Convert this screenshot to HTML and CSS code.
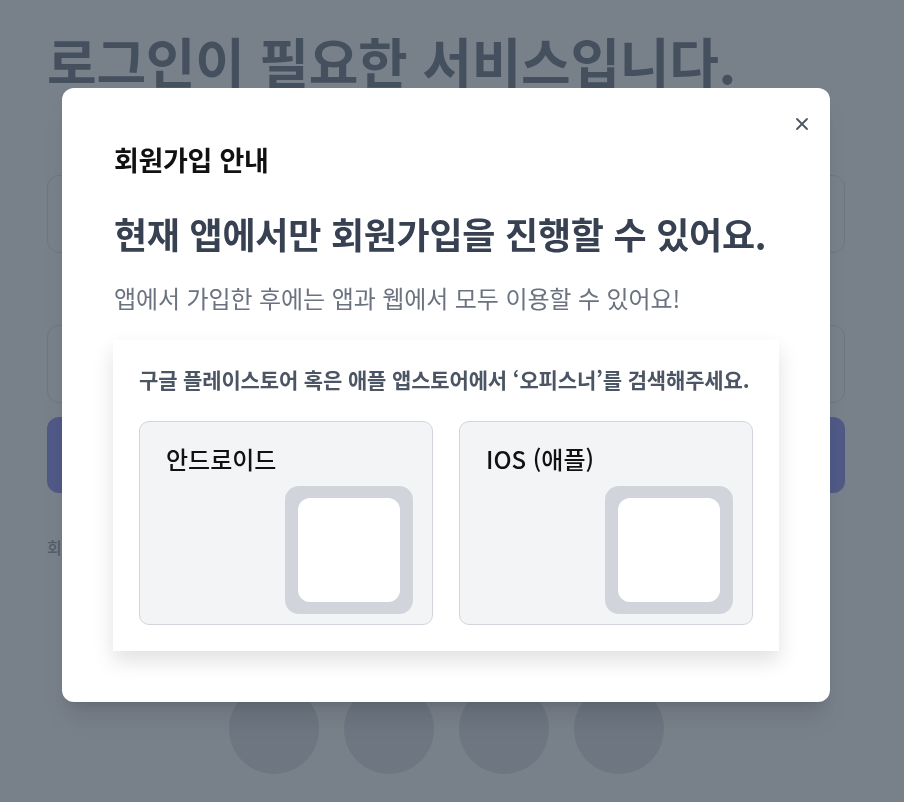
FILE: index.html
```html
<!DOCTYPE html>
<html lang="ko">

<head>
    <meta charset="UTF-8">
    <meta name="viewport" content="width=device-width, initial-scale=1.0">
    <title>로그인</title>
    <link rel="stylesheet" href="styles.css">
</head>

<body>

    <main class="page">
        <h1 class="page-title">로그인이 필요한 서비스입니다.</h1>

        <div class="field"></div>
        <div class="field field-second"></div>
        <div class="login-btn"></div>

        <p class="join-text">회원이 아니신가요?</p>

        <div class="social">
            <span class="social-item"></span>
            <span class="social-item"></span>
            <span class="social-item"></span>
            <span class="social-item"></span>
        </div>
    </main>

    <div class="overlay">
        <div class="modal">
            <button class="close-btn" type="button" aria-label="닫기">
                <svg width="14" height="14" viewBox="0 0 14 14">
                    <path d="M2 2 L12 12 M12 2 L2 12" stroke="#4b5563" stroke-width="1.8" stroke-linecap="round" />
                </svg>
            </button>

            <h2 class="modal-label">회원가입 안내</h2>
            <h3 class="modal-title">현재 앱에서만 회원가입을 진행할 수 있어요.</h3>
            <p class="modal-desc">앱에서 가입한 후에는 앱과 웹에서 모두 이용할 수 있어요!</p>

            <div class="store-box">
                <p class="store-guide">구글 플레이스토어 혹은 애플 앱스토어에서 ‘오피스너’를 검색해주세요.</p>

                <div class="store-list">
                    <div class="store-card">
                        <span class="store-name">안드로이드</span>
                        <div class="qr-frame"><div class="qr-inner"></div></div>
                    </div>
                    <div class="store-card">
                        <span class="store-name">IOS (애플)</span>
                        <div class="qr-frame"><div class="qr-inner"></div></div>
                    </div>
                </div>
            </div>
        </div>
    </div>

</body>

</html>
```

FILE: styles.css
```css
* {
    margin: 0;
    padding: 0;
    box-sizing: border-box;
}

body {
    font-family: "Noto Sans CJK KR", "Noto Sans", sans-serif;
    background-color: #fff;
    width: 904px;
    height: 802px;
    overflow: hidden;
}

/* page behind the modal */
.page {
    padding: 26px 59px 0 47px;
}

.page-title {
    font-size: 54px;
    font-weight: 700;
    color: #374151;
    line-height: 70px;
    letter-spacing: -0.3px;
}

.field {
    height: 78px;
    margin-top: 79px;
    border: 1px solid #d1d5db;
    border-radius: 12px;
}

.field-second {
    margin-top: 72px;
}

.login-btn {
    height: 76px;
    margin-top: 14px;
    background-color: #6366f1;
    border-radius: 12px;
}

.join-text {
    margin-top: 42px;
    font-size: 16px;
    color: #6b7280;
    font-weight: 500;
}

.social {
    display: flex;
    justify-content: center;
    gap: 25px;
    margin-top: 125px;
}

.social-item {
    width: 90px;
    height: 90px;
    border-radius: 50%;
    background-color: #d1d5db;
}

/* modal */
.overlay {
    position: fixed;
    inset: 0;
    background-color: rgba(75, 85, 99, 0.75);
    display: flex;
    justify-content: center;
    align-items: center;
    padding: 0 12px 12px 0;
}

.modal {
    position: relative;
    width: 768px;
    background-color: #fff;
    border-radius: 12px;
    padding: 56px 51px 51px 51px;
    box-shadow: 0 20px 25px -5px rgba(0, 0, 0, 0.1), 0 8px 10px -6px rgba(0, 0, 0, 0.1);
}

.close-btn {
    position: absolute;
    top: 29px;
    right: 21px;
    width: 14px;
    height: 14px;
    border: none;
    background: none;
    cursor: pointer;
    display: flex;
}

.modal-label {
    font-size: 27px;
    font-weight: 700;
    color: #111;
    line-height: 32px;
    letter-spacing: -0.3px;
    padding-left: 1px;
}

.modal-title {
    margin-top: 35px;
    font-size: 36px;
    font-weight: 700;
    color: #374151;
    line-height: 44px;
    letter-spacing: -0.25px;
    padding-left: 1px;
}

.modal-desc {
    margin-top: 27px;
    font-size: 24px;
    color: #6b7280;
    line-height: 32px;
    letter-spacing: -0.1px;
    padding-left: 1px;
}

.store-box {
    margin-top: 26px;
    padding: 25px 26px 26px;
    background-color: #fff;
    box-shadow: 0 10px 20px rgba(0, 0, 0, 0.12);
}

.store-guide {
    font-size: 21px;
    font-weight: 600;
    color: #4b5563;
    line-height: 28px;
    letter-spacing: -0.15px;
}

.store-list {
    display: flex;
    gap: 26px;
    margin-top: 28px;
}

.store-card {
    flex: 1;
    display: flex;
    flex-direction: column;
    padding: 22px 19px 10px 26px;
    background-color: #f3f4f6;
    border: 1px solid #d1d5db;
    border-radius: 10px;
}

.store-name {
    font-size: 24px;
    font-weight: 500;
    color: #111;
    line-height: 30px;
}

.qr-frame {
    align-self: flex-end;
    margin-top: 12px;
    width: 128px;
    height: 128px;
    padding: 12px 13px;
    background-color: #d1d5db;
    border-radius: 14px;
}

.qr-inner {
    width: 100%;
    height: 100%;
    background-color: #fff;
    border-radius: 12px;
}
```
